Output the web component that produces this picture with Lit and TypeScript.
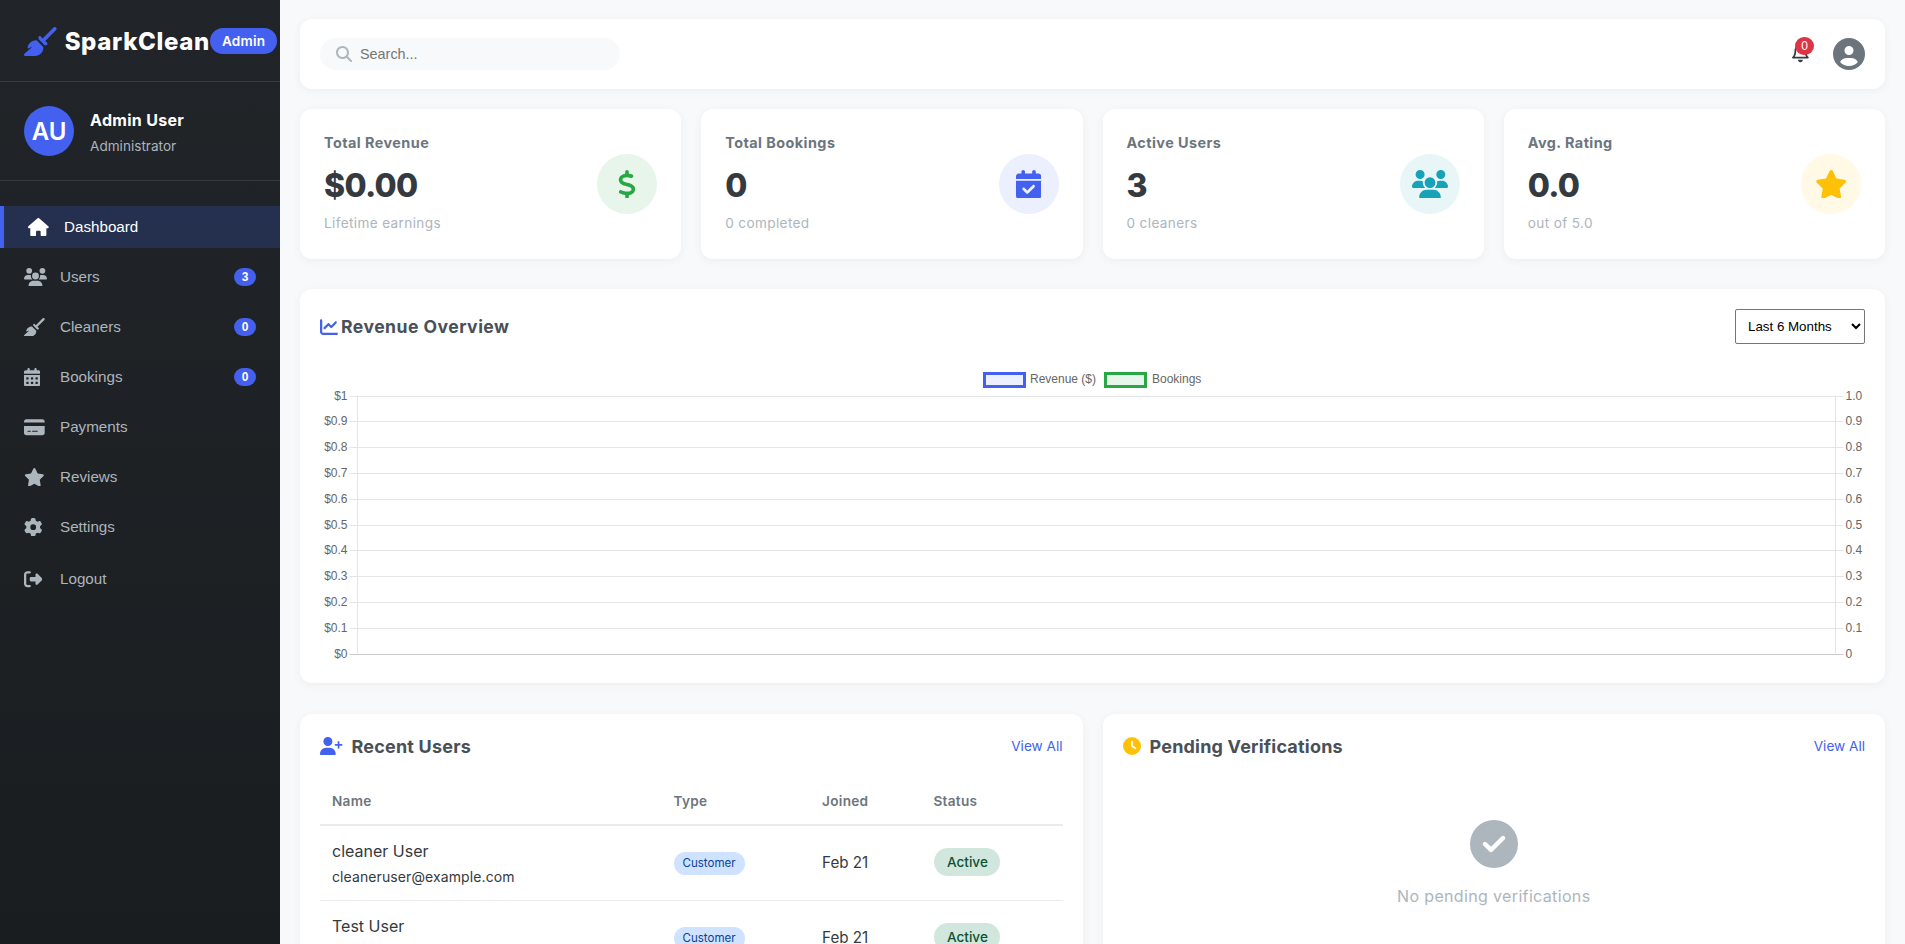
import { LitElement, html, css, svg } from "lit";
import { customElement } from "lit/decorators.js";

// font-awesome 6 shapes, [viewBox width, path]
const ICONS: Record<string, [number, string]> = {
  broom: [576, "M566.6 54.6c12.5-12.5 12.5-32.8 0-45.3s-32.8-12.5-45.3 0l-192 192-34.7-34.7c-4.2-4.2-10-6.6-16-6.6c-12.5 0-22.6 10.1-22.6 22.6v29.1L364.3 320h29.1c12.5 0 22.6-10.1 22.6-22.6c0-6-2.4-11.8-6.6-16l-34.7-34.7 192-192zM341.1 353.4L222.6 234.9c-42.7-3.7-85.2 11.7-115.8 42.3l-8 8C76.5 307.5 64 337.7 64 369.2c0 6.8 7.1 11.2 13.2 8.2l51.1-25.5c5-2.5 9.5 4.1 5.4 7.9L7.3 473.4C2.7 477.6 0 483.6 0 489.9C0 502.1 9.9 512 22.1 512l173.3 0c38.8 0 75.9-15.4 103.4-42.8c30.6-30.6 45.9-73.1 42.3-115.8z"],
  home: [576, "M575.8 255.5c0 18-15 32.1-32 32.1h-32l.7 160.2c0 2.7-.2 5.4-.5 8.1V472c0 22.1-17.9 40-40 40H456c-1.1 0-2.2 0-3.3-.1c-1.4 .1-2.8 .1-4.2 .1H416 392c-22.1 0-40-17.9-40-40V448 384c0-17.7-14.3-32-32-32H256c-17.7 0-32 14.3-32 32v64 24c0 22.1-17.9 40-40 40H160 128.1c-1.5 0-3-.1-4.5-.2c-1.2 .1-2.4 .2-3.6 .2H104c-22.1 0-40-17.9-40-40V360c0-.9 0-1.9 .1-2.8V287.6H32c-18 0-32-14-32-32.1c0-9 3-17 10-24L266.4 8c7-7 15-8 22-8s15 2 21 7L564.8 231.5c8 7 12 15 11 24z"],
  users: [640, "M144 0a80 80 0 1 1 0 160A80 80 0 1 1 144 0zM512 0a80 80 0 1 1 0 160A80 80 0 1 1 512 0zM0 298.7C0 239.8 47.8 192 106.7 192h42.7c15.9 0 31 3.5 44.6 9.7c-1.3 7.2-1.9 14.7-1.9 22.3c0 38.2 16.8 72.5 43.3 96c-.2 0-.4 0-.7 0H21.3C9.6 320 0 310.4 0 298.7zM405.3 320c-.2 0-.4 0-.7 0c26.6-23.5 43.3-57.8 43.3-96c0-7.6-.7-15-1.9-22.3c13.6-6.3 28.7-9.7 44.6-9.7h42.7C592.2 192 640 239.8 640 298.7c0 11.8-9.6 21.3-21.3 21.3H405.3zM224 224a96 96 0 1 1 192 0 96 96 0 1 1 -192 0zM128 485.3C128 411.7 187.7 352 261.3 352H378.7C452.3 352 512 411.7 512 485.3c0 14.7-11.9 26.7-26.7 26.7H154.7c-14.7 0-26.7-11.9-26.7-26.7z"],
  calendar: [448, "M128 0c17.7 0 32 14.3 32 32V64H288V32c0-17.7 14.3-32 32-32s32 14.3 32 32V64h48c26.5 0 48 21.5 48 48v48H0V112C0 85.5 21.5 64 48 64H96V32c0-17.7 14.3-32 32-32zM0 192H448V464c0 26.5-21.5 48-48 48H48c-26.5 0-48-21.5-48-48V192zm64 80v32c0 8.8 7.2 16 16 16h32c8.8 0 16-7.2 16-16V272c0-8.8-7.2-16-16-16H80c-8.8 0-16 7.2-16 16zm128 0v32c0 8.8 7.2 16 16 16h32c8.8 0 16-7.2 16-16V272c0-8.8-7.2-16-16-16H208c-8.8 0-16 7.2-16 16zm144-16c-8.8 0-16 7.2-16 16v32c0 8.8 7.2 16 16 16h32c8.8 0 16-7.2 16-16V272c0-8.8-7.2-16-16-16H336zM64 400v32c0 8.8 7.2 16 16 16h32c8.8 0 16-7.2 16-16V400c0-8.8-7.2-16-16-16H80c-8.8 0-16 7.2-16 16zm144-16c-8.8 0-16 7.2-16 16v32c0 8.8 7.2 16 16 16h32c8.8 0 16-7.2 16-16V400c0-8.8-7.2-16-16-16H208zm112 16v32c0 8.8 7.2 16 16 16h32c8.8 0 16-7.2 16-16V400c0-8.8-7.2-16-16-16H336c-8.8 0-16 7.2-16 16z"],
  card: [576, "M64 32C28.7 32 0 60.7 0 96v32H576V96c0-35.3-28.7-64-64-64H64zM576 224H0V416c0 35.3 28.7 64 64 64H512c35.3 0 64-28.7 64-64V224zM112 352h64c8.8 0 16 7.2 16 16s-7.2 16-16 16H112c-8.8 0-16-7.2-16-16s7.2-16 16-16zm112 16c0-8.8 7.2-16 16-16H368c8.8 0 16 7.2 16 16s-7.2 16-16 16H240c-8.8 0-16-7.2-16-16z"],
  star: [576, "M316.9 18C311.6 7 300.4 0 288.1 0s-23.4 7-28.8 18L195 150.3 51.4 171.5c-12 1.8-22 10.2-25.7 21.7s-.7 24.2 7.9 32.7L137.8 329 113.2 474.7c-2 12 3 24.2 12.9 31.3s23 8 33.8 2.3l128.3-68.5 128.3 68.5c10.8 5.7 23.9 4.9 33.8-2.3s14.9-19.3 12.9-31.3L438.5 329 542.7 225.9c8.6-8.5 11.7-21.2 7.9-32.7s-13.7-19.9-25.7-21.7L381.2 150.3 316.9 18z"],
  cog: [512, "M495.9 166.6c3.2 8.7 .5 18.4-6.4 24.6l-43.3 39.4c1.1 8.3 1.7 16.8 1.7 25.4s-.6 17.1-1.7 25.4l43.3 39.4c6.9 6.2 9.6 15.9 6.4 24.6c-4.4 11.9-9.7 23.3-15.8 34.3l-4.7 8.1c-6.6 11-14 21.4-22.1 31.2c-5.9 7.2-15.7 9.6-24.5 6.8l-55.7-17.7c-13.4 10.3-28.2 18.9-44 25.4l-12.5 57.1c-2 9.1-9 16.3-18.2 17.8c-13.8 2.3-28 3.5-42.5 3.5s-28.7-1.2-42.5-3.5c-9.2-1.5-16.2-8.7-18.2-17.8l-12.5-57.1c-15.8-6.5-30.6-15.1-44-25.4L83.1 425.9c-8.8 2.8-18.6 .3-24.5-6.8c-8.1-9.8-15.5-20.2-22.1-31.2l-4.7-8.1c-6.1-11-11.4-22.4-15.8-34.3c-3.2-8.7-.5-18.4 6.4-24.6l43.3-39.4C64.6 273.1 64 264.6 64 256s.6-17.1 1.7-25.4L22.4 191.2c-6.9-6.2-9.6-15.9-6.4-24.6c4.4-11.9 9.7-23.3 15.8-34.3l4.7-8.1c6.6-11 14-21.4 22.1-31.2c5.9-7.2 15.7-9.6 24.5-6.8l55.7 17.7c13.4-10.3 28.2-18.9 44-25.4l12.5-57.1c2-9.1 9-16.3 18.2-17.8C227.3 1.2 241.5 0 256 0s28.7 1.2 42.5 3.5c9.2 1.5 16.2 8.7 18.2 17.8l12.5 57.1c15.8 6.5 30.6 15.1 44 25.4l55.7-17.7c8.8-2.8 18.6-.3 24.5 6.8c8.1 9.8 15.5 20.2 22.1 31.2l4.7 8.1c6.1 11 11.4 22.4 15.8 34.3zM256 336a80 80 0 1 0 0-160 80 80 0 1 0 0 160z"],
  logout: [512, "M377.9 105.9L500.7 228.7c7.2 7.2 11.3 17.1 11.3 27.3s-4.1 20.1-11.3 27.3L377.9 406.1c-6.4 6.4-15 9.9-24 9.9c-18.7 0-33.9-15.2-33.9-33.9l0-62.1-128 0c-17.7 0-32-14.3-32-32l0-64c0-17.7 14.3-32 32-32l128 0 0-62.1c0-18.7 15.2-33.9 33.9-33.9c9 0 17.6 3.6 24 9.9zM160 96L96 96c-17.7 0-32 14.3-32 32l0 256c0 17.7 14.3 32 32 32l64 0c17.7 0 32 14.3 32 32s-14.3 32-32 32l-64 0c-53 0-96-43-96-96L0 128C0 75 43 32 96 32l64 0c17.7 0 32 14.3 32 32s-14.3 32-32 32z"],
  search: [512, "M416 208c0 45.9-14.9 88.3-40 122.7L502.6 457.4c12.5 12.5 12.5 32.8 0 45.3s-32.8 12.5-45.3 0L330.7 376c-34.4 25.2-76.8 40-122.7 40C93.1 416 0 322.9 0 208S93.1 0 208 0S416 93.1 416 208zM208 352a144 144 0 1 0 0-288 144 144 0 1 0 0 288z"],
  bell: [448, "M224 0c-17.7 0-32 14.3-32 32V51.2C119 66 64 130.6 64 208v25.4c0 45.4-15.5 89.5-43.8 124.9L5.3 377c-5.8 7.2-6.9 17.1-2.9 25.4S14.8 416 24 416H424c9.2 0 17.6-5.3 21.6-13.6s2.9-18.2-2.9-25.4l-14.9-18.6C399.5 322.9 384 278.8 384 233.4V208c0-77.4-55-142-128-156.8V32c0-17.7-14.3-32-32-32zm0 96c61.9 0 112 50.1 112 112v25.4c0 47.9 13.9 94.6 39.7 134.6H72.3C98.1 328 112 281.3 112 233.4V208c0-61.9 50.1-112 112-112zm64 352H224 160c0 17 6.7 33.3 18.7 45.3s28.3 18.7 45.3 18.7s33.3-6.7 45.3-18.7s18.7-28.3 18.7-45.3z"],
  userCircle: [512, "M399 384.2C376.9 345.8 335.4 320 288 320H224c-47.4 0-88.9 25.8-111 64.2c35.2 39.2 86.2 63.8 143 63.8s107.8-24.7 143-63.8zM0 256a256 256 0 1 1 512 0A256 256 0 1 1 0 256zm256 16a72 72 0 1 0 0-144 72 72 0 1 0 0 144z"],
  dollar: [320, "M160 0c17.7 0 32 14.3 32 32V67.7c1.6 .2 3.1 .4 4.7 .7c.4 .1 .7 .1 1.1 .2l48 8.8c17.4 3.2 28.9 19.9 25.7 37.2s-19.9 28.9-37.2 25.7l-47.5-8.7c-31.3-4.6-58.9-1.5-78.3 6.2s-27.2 18.3-29 28.1c-2 10.7-.5 16.7 1.2 20.4c1.8 3.9 5.5 8.3 12.8 13.2c16.3 10.7 41.3 17.7 73.7 26.3l2.9 .8c28.6 7.6 63.6 16.8 89.6 33.8c14.2 9.3 27.6 21.9 35.9 39.5c8.5 17.9 10.3 37.9 6.4 59.2c-6.9 38-33.1 63.4-65.6 76.7c-13.7 5.6-28.6 9.2-44.4 11V480c0 17.7-14.3 32-32 32s-32-14.3-32-32V445.1c-.4-.1-.9-.1-1.3-.2l-.2 0 0 0c-24.4-3.8-64.5-14.3-91.5-26.3c-16.1-7.2-23.4-26.1-16.2-42.2s26.1-23.4 42.2-16.2c20.9 9.3 55.3 18.5 75.2 21.6c31.9 4.7 58.2 2 76-5.3c16.9-6.9 24.6-16.9 26.8-28.9c1.9-10.6 .4-16.7-1.3-20.4c-1.9-4-5.6-8.4-13-13.3c-16.4-10.7-41.5-17.7-74-26.3l-2.8-.7 0 0C119.4 279.3 84.4 270 58.4 253c-14.2-9.3-27.5-22-35.8-39.6c-8.4-17.9-10.1-37.9-6.1-59.2C23.7 116 52.3 91.2 84.8 78.3c13.3-5.3 27.9-8.9 43.2-11V32c0-17.7 14.3-32 32-32z"],
  calendarCheck: [448, "M128 0c17.7 0 32 14.3 32 32V64H288V32c0-17.7 14.3-32 32-32s32 14.3 32 32V64h48c26.5 0 48 21.5 48 48v48H0V112C0 85.5 21.5 64 48 64H96V32c0-17.7 14.3-32 32-32zM0 192H448V464c0 26.5-21.5 48-48 48H48c-26.5 0-48-21.5-48-48V192zM329 305c9.4-9.4 9.4-24.6 0-33.9s-24.6-9.4-33.9 0l-95 95-47-47c-9.4-9.4-24.6-9.4-33.9 0s-9.4 24.6 0 33.9l64 64c9.4 9.4 24.6 9.4 33.9 0L329 305z"],
  chartLine: [512, "M64 64c0-17.7-14.3-32-32-32S0 46.3 0 64V400c0 44.2 35.8 80 80 80H480c17.7 0 32-14.3 32-32s-14.3-32-32-32H80c-8.8 0-16-7.2-16-16V64zm406.6 86.6c12.5-12.5 12.5-32.8 0-45.3s-32.8-12.5-45.3 0L320 210.7l-57.4-57.4c-12.5-12.5-32.8-12.5-45.3 0l-112 112c-12.5 12.5-12.5 32.8 0 45.3s32.8 12.5 45.3 0L240 221.3l57.4 57.4c12.5 12.5 32.8 12.5 45.3 0l128-128z"],
  userPlus: [640, "M96 128a128 128 0 1 1 256 0A128 128 0 1 1 96 128zM0 482.3C0 383.8 79.8 304 178.3 304h91.4C368.2 304 448 383.8 448 482.3c0 16.4-13.3 29.7-29.7 29.7H29.7C13.3 512 0 498.7 0 482.3zM504 312V248H440c-13.3 0-24-10.7-24-24s10.7-24 24-24h64V136c0-13.3 10.7-24 24-24s24 10.7 24 24v64h64c13.3 0 24 10.7 24 24s-10.7 24-24 24H552v64c0 13.3-10.7 24-24 24s-24-10.7-24-24z"],
  clock: [512, "M256 0a256 256 0 1 1 0 512A256 256 0 1 1 256 0zM232 120V256c0 8 4 15.5 10.7 20l96 64c11 7.4 25.9 4.4 33.3-6.7s4.4-25.9-6.7-33.3L280 243.2V120c0-13.3-10.7-24-24-24s-24 10.7-24 24z"],
  checkCircle: [512, "M256 512A256 256 0 1 0 256 0a256 256 0 1 0 0 512zM369 209L241 337c-9.4 9.4-24.6 9.4-33.9 0l-64-64c-9.4-9.4-9.4-24.6 0-33.9s24.6-9.4 33.9 0l47 47L335 175c9.4-9.4 24.6-9.4 33.9 0s9.4 24.6 0 33.9z"],
};

// icon height in px, width follows the viewBox
const icon = (name: string, h: number) => {
  const [w, d] = ICONS[name];
  return html`<svg class="ico" viewBox="0 0 ${w} 512" width=${(w / 512) * h} height=${h} fill="currentColor"><path d=${d}></path></svg>`;
};

const NAV = [
  { label: "Users", ico: "users", badge: "3" },
  { label: "Cleaners", ico: "broom", badge: "0" },
  { label: "Bookings", ico: "calendar", badge: "0" },
  { label: "Payments", ico: "card" },
  { label: "Reviews", ico: "star" },
  { label: "Settings", ico: "cog" },
];

const STATS = [
  { label: "Total Revenue", value: "$0.00", sub: "Lifetime earnings", ico: "dollar", tone: "green" },
  { label: "Total Bookings", value: "0", sub: "0 completed", ico: "calendarCheck", tone: "blue" },
  { label: "Active Users", value: "3", sub: "0 cleaners", ico: "users", tone: "teal" },
  { label: "Avg. Rating", value: "0.0", sub: "out of 5.0", ico: "star", tone: "yellow" },
];

const USERS = [
  { name: "cleaner User", email: "cleaneruser@example.com" },
  { name: "Test User", email: "testuser@example.com" },
];

@customElement("app-root")
export class AppRoot extends LitElement {
  static styles = css`
    :host {
      display: flex;
      height: 944px;
      overflow: hidden;
      background: #f8f9fa;
      font-family: Inter, "Liberation Sans", sans-serif;
      color: #343a40;
    }
    .ico {
      display: block;
      flex: none;
    }

    .side {
      width: 280px;
      flex: none;
      background: linear-gradient(180deg, #212529, #1a1d20);
      color: #fff;
    }
    .brand {
      height: 82px;
      display: flex;
      align-items: center;
      padding: 1px 0 0 24px;
      border-bottom: 1px solid rgba(255, 255, 255, 0.1);
      box-sizing: border-box;
    }
    .brand .ico {
      color: #4361ee;
      margin-right: 8px;
    }
    .brand b {
      font-size: 24px;
      font-weight: 800;
      letter-spacing: 0.65px;
    }
    .tag {
      background: #4361ee;
      border-radius: 13px;
      font-size: 13.6px;
      font-weight: 600;
      line-height: 26px;
      padding: 0 12px;
      letter-spacing: 0.2px;
    }
    .me {
      height: 99px;
      box-sizing: border-box;
      display: flex;
      align-items: center;
      gap: 16px;
      padding-left: 24px;
      border-bottom: 1px solid rgba(255, 255, 255, 0.1);
    }
    .avatar {
      width: 50px;
      height: 50px;
      border-radius: 50%;
      background: #4361ee;
      display: flex;
      align-items: center;
      justify-content: center;
      font-size: 24px;
      font-weight: 600;
    }
    .who-box {
      padding-top: 2px;
    }
    .me strong {
      display: block;
      font-size: 16px;
      font-weight: 700;
      margin-bottom: 5px;
      letter-spacing: 0.3px;
    }
    .me span {
      font-size: 13.6px;
      color: #adb5bd;
    }
    nav {
      padding-top: 24.75px;
      display: flex;
      flex-direction: column;
      gap: 8px;
      font-family: "Liberation Sans", Arial, sans-serif;
      font-size: 15.2px;
    }
    .item {
      height: 42px;
      display: flex;
      align-items: center;
      padding: 0 24px;
      color: #adb5bd;
    }
    .item .slot {
      width: 36px;
      flex: none;
    }
    .item .count {
      margin-left: auto;
      width: 22px;
      height: 18px;
      border-radius: 9px;
      background: #4361ee;
      color: #fff;
      font-size: 12px;
      font-weight: 700;
      line-height: 18px;
      text-align: center;
    }
    .item.active {
      background: rgba(67, 97, 238, 0.2);
      border-left: 4px solid #4361ee;
      padding-left: 24px;
      color: #fff;
    }
    .item.logout {
      margin-top: 2px;
    }

    main {
      flex: 1;
      min-width: 0;
      padding: 19px 20px 0;
      display: flex;
      flex-direction: column;
    }
    .card {
      background: #fff;
      border-radius: 12px;
      box-shadow: 0 2px 10px rgba(0, 0, 0, 0.05);
    }
    .top {
      height: 70px;
      flex: none;
      display: flex;
      align-items: center;
      padding: 0 20px;
      margin-bottom: 20px;
    }
    .search {
      width: 300px;
      height: 32px;
      box-sizing: border-box;
      border-radius: 16px;
      background: #f8f9fa;
      display: flex;
      align-items: center;
      gap: 8px;
      padding-left: 16px;
      color: #adb5bd;
    }
    .search input {
      border: 0;
      outline: 0;
      background: none;
      padding: 0;
      flex: 1;
      font: 14.4px "Liberation Sans", Arial, sans-serif;
    }
    .bell {
      position: relative;
      margin: -2px 24px 0 auto;
      color: #343a40;
    }
    .bell i {
      position: absolute;
      top: -6.5px;
      left: 3px;
      width: 19px;
      height: 18px;
      border-radius: 9px;
      background: #dc3545;
      color: #fff;
      font: 12px/18px "Liberation Sans", Arial, sans-serif;
      text-align: center;
    }
    .me-ico {
      color: #6c757d;
    }

    .stats {
      display: grid;
      grid-template-columns: repeat(4, 1fr);
      gap: 20px;
      margin-bottom: 30px;
      flex: none;
    }
    .stat {
      height: 150px;
      box-sizing: border-box;
      padding: 24px;
      display: flex;
      align-items: center;
      justify-content: space-between;
    }
    .stat-text {
      padding-bottom: 3px;
    }
    .stat h4 {
      margin: 0 0 11px;
      font-size: 14.4px;
      line-height: 20px;
      font-weight: 700;
      color: #6c757d;
      letter-spacing: 0.45px;
    }
    .stat .num {
      font-size: 32px;
      line-height: 44px;
      font-weight: 800;
      color: #343a40;
      letter-spacing: -0.7px;
    }
    .stat small {
      display: block;
      margin-top: 5px;
      font-size: 13.6px;
      line-height: 20px;
      color: #adb5bd;
      letter-spacing: 0.36px;
    }
    .round {
      width: 60px;
      height: 60px;
      border-radius: 50%;
      display: flex;
      align-items: center;
      justify-content: center;
    }
    .green {
      background: #e8f5ea;
      color: #28a745;
    }
    .blue {
      background: #eceffd;
      color: #4361ee;
    }
    .teal {
      background: #e8f6f8;
      color: #17a2b8;
    }
    .yellow {
      background: #fff9e6;
      color: #ffc107;
    }

    .chart {
      height: 394px;
      flex: none;
      padding: 20px;
      box-sizing: border-box;
      margin-bottom: 31px;
    }
    .head {
      display: flex;
      align-items: center;
      justify-content: space-between;
    }
    h3 {
      margin: 0;
      display: flex;
      align-items: center;
      font-size: 17.6px;
      font-weight: 700;
      color: #495057;
    }
    .chart h3 {
      letter-spacing: 0.47px;
    }
    .chart h3 .ico {
      color: #4361ee;
      margin-right: 3px;
    }
    select {
      width: 130px;
      height: 35px;
      background: #fff;
      border: 1px solid #767676;
      border-radius: 2px;
      padding: 0 8px;
      font: 13.33px "Liberation Sans", Arial, sans-serif;
      color: #000;
    }
    .plot {
      display: block;
      margin-top: 19px;
      font-family: "Liberation Sans", Arial, sans-serif;
      font-size: 12px;
      fill: #666;
    }

    .pair {
      display: grid;
      grid-template-columns: 1fr 1fr;
      gap: 20px;
      flex: 1;
    }
    .panel {
      padding: 20px;
      height: 400px;
      box-sizing: border-box;
    }
    .panel .head {
      height: 26px;
      margin-top: -1px;
    }
    .panel h3 {
      font-size: 18px;
      gap: 9px;
      letter-spacing: 0.2px;
    }
    .plus {
      color: #4361ee;
    }
    .view {
      font-size: 13.6px;
      color: #4361ee;
    }
    table {
      width: 100%;
      margin-top: 20px;
      border-collapse: collapse;
      table-layout: fixed;
    }
    .c-name {
      width: 46%;
    }
    .c-type {
      width: 20%;
    }
    .c-date {
      width: 15%;
    }
    th {
      height: 46px;
      padding: 0 12px 2px;
      box-sizing: border-box;
      text-align: left;
      font-size: 13.6px;
      font-weight: 600;
      color: #6c757d;
      border-bottom: 2px solid #e9ecef;
      letter-spacing: 0.3px;
    }
    td {
      height: 73px;
      padding: 0 12px 1px;
      font-size: 15.2px;
      color: #343a40;
      border-bottom: 1px solid #e9ecef;
    }
    td .mail {
      display: block;
      margin-top: 7px;
      font-size: 14px;
      letter-spacing: 0.1px;
    }
    td .who {
      font-size: 16px;
    }
    .kind {
      display: inline-block;
      padding: 0 9px;
      line-height: 23px;
      border-radius: 12px;
      background: #cfe2ff;
      color: #084298;
      font-size: 11.52px;
      position: relative;
      top: 1px;
    }
    .state {
      display: inline-block;
      padding: 0 12.5px;
      line-height: 28px;
      border-radius: 14px;
      background: #d1e7dd;
      color: #0f5132;
      font-size: 13.6px;
      font-weight: 500;
      position: relative;
      top: -1px;
      left: 1px;
    }
    .clock {
      color: #ffc107;
    }
    .empty {
      margin-top: 61px;
      display: flex;
      flex-direction: column;
      align-items: center;
      gap: 18px;
      color: #adb5bd;
      font-size: 16px;
      letter-spacing: 0.35px;
    }
  `;

  // the chart is empty, only the grid and the axes are drawn
  private plot() {
    const left = 37.5, right = 1515.5, top = 32.5, bottom = 290.5;
    const rows = ["$1", "$0.9", "$0.8", "$0.7", "$0.6", "$0.5", "$0.4", "$0.3", "$0.2", "$0.1", "$0"];
    const rowsR = ["1.0", "0.9", "0.8", "0.7", "0.6", "0.5", "0.4", "0.3", "0.2", "0.1", "0"];
    const step = (bottom - top) / 10;
    return html`<svg class="plot" width="1545" height="300" viewBox="0 0 1545 300">
      <rect x="664.5" y="10.5" width="40" height="13" fill="#eceffd" stroke="#4361ee" stroke-width="3"></rect>
      <text x="710" y="20">Revenue ($)</text>
      <rect x="785.5" y="10.5" width="40" height="13" fill="#e8f5ea" stroke="#28a745" stroke-width="3"></rect>
      <text x="832" y="20">Bookings</text>
      ${rows.map((t, i) => {
        const y = Math.round(top + i * step) + 0.5;
        return svg`
          <line x1=${left - 8} x2=${right + 8} y1=${y} y2=${y} stroke=${i == 10 ? "#ccc" : "#e5e5e5"}></line>
          <text x=${left - 10} y=${y + 3} text-anchor="end">${t}</text>
          <text x=${right + 10} y=${y + 3}>${rowsR[i]}</text>`;
      })}
      <line x1=${left} x2=${left} y1=${top} y2=${bottom} stroke="#e5e5e5"></line>
      <line x1=${right} x2=${right} y1=${top} y2=${bottom} stroke="#e5e5e5"></line>
    </svg>`;
  }

  render() {
    return html`
      <aside class="side">
        <div class="brand">
          ${icon("broom", 29)}
          <b>SparkClean</b>
          <span class="tag">Admin</span>
        </div>
        <div class="me">
          <div class="avatar">AU</div>
          <div class="who-box">
            <strong>Admin User</strong>
            <span>Administrator</span>
          </div>
        </div>
        <nav>
          <div class="item active">
            <span class="slot">${icon("home", 18.4)}</span>Dashboard
          </div>
          ${NAV.map(
            (n) => html`<div class="item">
              <span class="slot">${icon(n.ico, 18.4)}</span>${n.label}
              ${n.badge ? html`<span class="count">${n.badge}</span>` : ""}
            </div>`
          )}
          <div class="item logout">
            <span class="slot">${icon("logout", 18.4)}</span>Logout
          </div>
        </nav>
      </aside>
      <main>
        <div class="card top">
          <label class="search">
            ${icon("search", 16)}
            <input placeholder="Search..." />
          </label>
          <div class="bell">${icon("bell", 19.2)}<i>0</i></div>
          <div class="me-ico">${icon("userCircle", 32)}</div>
        </div>
        <div class="stats">
          ${STATS.map(
            (s) => html`<div class="card stat">
              <div class="stat-text">
                <h4>${s.label}</h4>
                <div class="num">${s.value}</div>
                <small>${s.sub}</small>
              </div>
              <div class="round ${s.tone}">${icon(s.ico, 28.8)}</div>
            </div>`
          )}
        </div>
        <div class="card chart">
          <div class="head">
            <h3>${icon("chartLine", 18)}Revenue Overview</h3>
            <select><option>Last 6 Months</option></select>
          </div>
          ${this.plot()}
        </div>
        <div class="pair">
          <div class="card panel">
            <div class="head">
              <h3><span class="plus">${icon("userPlus", 18)}</span>Recent Users</h3>
              <span class="view">View All</span>
            </div>
            <table>
              <colgroup><col class="c-name" /><col class="c-type" /><col class="c-date" /><col /></colgroup>
              <thead>
                <tr><th>Name</th><th>Type</th><th>Joined</th><th>Status</th></tr>
              </thead>
              <tbody>
                ${USERS.map(
                  (u) => html`<tr>
                    <td><span class="who">${u.name}</span><span class="mail">${u.email}</span></td>
                    <td><span class="kind">Customer</span></td>
                    <td>Feb 21</td>
                    <td><span class="state">Active</span></td>
                  </tr>`
                )}
              </tbody>
            </table>
          </div>
          <div class="card panel">
            <div class="head">
              <h3><span class="clock">${icon("clock", 18)}</span>Pending Verifications</h3>
              <span class="view">View All</span>
            </div>
            <div class="empty">
              ${icon("checkCircle", 48)}
              <span>No pending verifications</span>
            </div>
          </div>
        </div>
      </main>
    `;
  }
}
